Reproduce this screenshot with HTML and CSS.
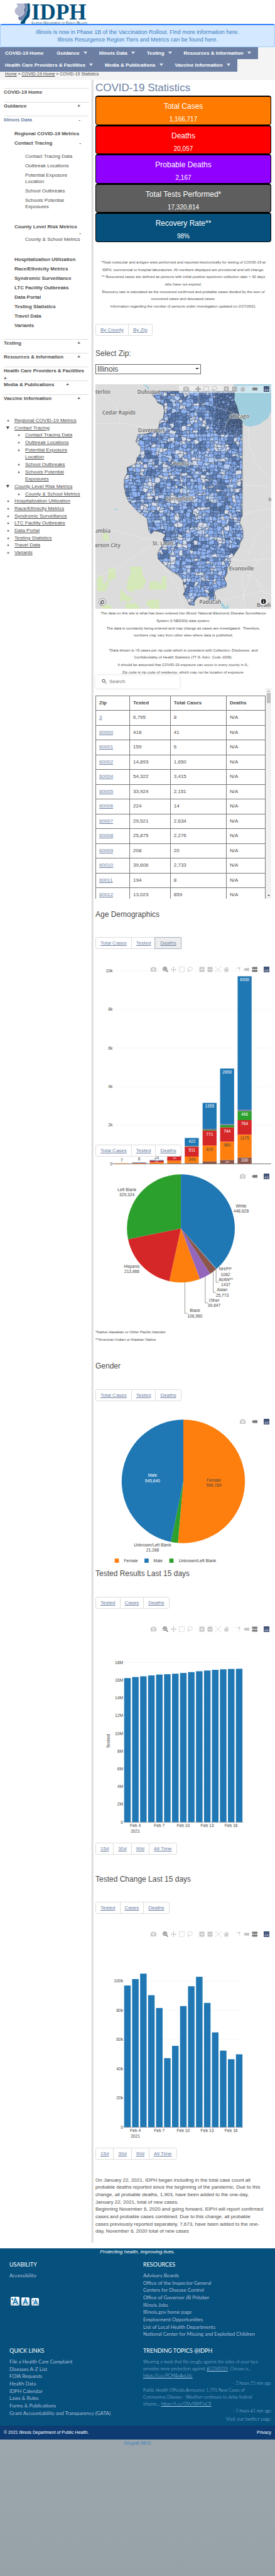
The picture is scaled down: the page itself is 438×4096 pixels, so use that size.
FILE: index.html
```html
<!DOCTYPE html>
<html lang="en">
<head>
<meta charset="utf-8">
<meta name="viewport" content="width=device-width, initial-scale=1">
<title>COVID-19 Statistics | IDPH</title>
<link rel="stylesheet" href="styles.css">
</head>
<body>
<header class="site-header">
  <a class="logo" href="#" aria-label="Illinois Department of Public Health">
    <svg viewBox="0 0 120 34" aria-hidden="true">
      <g transform="scale(.2794 .2206) translate(-82 -23)" stroke="#fff" stroke-width="2">
        <path fill="#05507c" d="M150 24h20l2 55-4 40-14 18-8 15-4 20-24 4-2-14 16-30 22-60z"/>
        <path fill="#6c7fa3" d="M133 24h20l3 36-8 45-14 26-10 20-18-8-4-18 12-10z"/>
        <path fill="#b4bad2" d="M93 24h42l6 26-8 22 5 22-10 18-14 10-14-10-12-12-6-20 6-20 12-12z"/>
      </g>
      <text class="logo-name" x="27" y="26">IDPH</text>
      <text class="logo-sub" x="27" y="33">Illinois Department of Public Health</text>
    </svg>
  </a>
</header>
<div class="banner">
  <a href="#">Illinois is now in Phase 1B of the Vaccination Rollout. Find more information here.</a>
  <a href="#">Illinois Resurgence Region Tiers and Metrics can be found here.</a>
</div>
<div class="top">
  <nav class="nav">
    <a href="#">COVID-19 Home</a>
    <a class="has-menu" href="#">Guidance</a>
    <a class="has-menu" href="#">Illinois Data</a>
    <a class="has-menu" href="#">Testing</a>
    <a class="has-menu" href="#">Resources &amp; Information</a>
    <a class="has-menu" href="#">Health Care Providers &amp; Facilities</a>
    <a class="has-menu" href="#">Media &amp; Publications</a>
    <a class="has-menu" href="#">Vaccine Information</a>
  </nav>
  <div class="crumbs"><a href="#">Home</a> » <a href="#">COVID-19 Home</a> » COVID-19 Statistics</div>
</div>
<div class="columns">
  <aside class="sidebar">
    <ul class="menu">
      <li><a href="#">COVID-19 Home</a></li>
      <li><a href="#">Guidance</a><button>+</button></li>
      <li><a class="active" href="#">Illinois Data</a><button>-</button></li>
    </ul>
    <ul class="submenu">
      <li><a href="#">Regional COVID-19 Metrics</a></li>
      <li><a href="#">Contact Tracing</a><button>-</button></li>
      <li class="nested">
        <ul>
          <li><a href="#">Contact Tracing Data</a></li>
          <li><a href="#">Outbreak Locations</a></li>
          <li><a href="#">Potential Exposure<br>Location</a></li>
          <li><a href="#">School Outbreaks</a></li>
          <li><a href="#">Schools Potential<br>Exposures</a></li>
        </ul>
      </li>
      <li class="stacked"><a href="#">County Level Risk Metrics</a><button>-</button></li>
      <li class="nested last">
        <ul><li><a href="#">County &amp; School Metrics</a></li></ul>
      </li>
      <li><a href="#">Hospitalization Utilization</a></li>
      <li><a href="#">Race/Ethnicity Metrics</a></li>
      <li><a href="#">Syndromic Surveillance</a></li>
      <li><a href="#">LTC Facility Outbreaks</a></li>
      <li><a href="#">Data Portal</a></li>
      <li><a href="#">Testing Statistics</a></li>
      <li><a href="#">Travel Data</a></li>
      <li><a href="#">Variants</a></li>
    </ul>
    <ul class="menu second">
      <li><a href="#">Testing</a><button>+</button></li>
      <li><a href="#">Resources &amp; Information</a><button>+</button></li>
      <li><a href="#">Health Care Providers &amp; Facilities</a><button>+</button></li>
      <li class="near"><a href="#">Media &amp; Publications</a><button>+</button></li>
      <li><a href="#">Vaccine Information</a><button>+</button></li>
    </ul>
    <ul class="links">
      <li><a href="#">Regional COVID-19 Metrics</a></li>
      <li class="open"><a href="#">Contact Tracing</a>
        <ul>
          <li><a href="#">Contact Tracing Data</a></li>
          <li><a href="#">Outbreak Locations</a></li>
          <li><a href="#">Potential Exposure<br>Location</a></li>
          <li><a href="#">School Outbreaks</a></li>
          <li><a href="#">Schools Potential<br>Exposures</a></li>
        </ul>
      </li>
      <li class="open"><a href="#">County Level Risk Metrics</a>
        <ul><li><a href="#">County &amp; School Metrics</a></li></ul>
      </li>
      <li><a href="#">Hospitalization Utilization</a></li>
      <li><a href="#">Race/Ethnicity Metrics</a></li>
      <li><a href="#">Syndromic Surveillance</a></li>
      <li><a href="#">LTC Facility Outbreaks</a></li>
      <li><a href="#">Data Portal</a></li>
      <li><a href="#">Testing Statistics</a></li>
      <li><a href="#">Travel Data</a></li>
      <li><a href="#">Variants</a></li>
    </ul>
  </aside>
  <main class="main">
    <h1>COVID-19 Statistics</h1>
    <div class="cards">
      <div class="card cases"><h3>Total Cases</h3><p>1,166,717</p></div>
      <div class="card deaths"><h3>Deaths</h3><p>20,057</p></div>
      <div class="card probable"><h3>Probable Deaths</h3><p>2,167</p></div>
      <div class="card tests"><h3>Total Tests Performed*</h3><p>17,320,814</p></div>
      <div class="card recovery"><h3>Recovery Rate**</h3><p>98%</p></div>
    </div>
    <p class="notes summary">*Total molecular and antigen tests performed and reported electronically for testing of COVID-19 at<br>IDPH, commercial or hospital laboratories. All numbers displayed are provisional and will change.<br>** Recovered cases are defined as persons with initial positive specimen collection date &gt; 42 days<br>who have not expired.<br>Recovery rate is calculated as the recovered confirmed and probable cases divided by the sum of<br>recovered cases and deceased cases.<br>Information regarding the number of persons under investigation updated on 2/17/2021.</p>
    <div class="tabs by"><a href="#">By County</a><a href="#">By Zip</a></div>
    <label class="h2 zip-label" for="zip">Select Zip:</label>
    <select id="zip"><option>Illinois</option></select>
    <div class="chart map">
      <svg id="map" viewBox="0 0 502 641" role="img" aria-label="Cases by zip code"></svg>
      <div class="modebar on-map" data-icons="camera|pan* box lasso|plus minus home|tag*|logo"></div>
    </div>
    <p class="notes map-notes">The data on this site is what has been entered into Illinois' National Electronic Disease Surveillance<br>System (I-NEDSS) data system.<br>The data is constantly being entered and may change as cases are investigated.&nbsp; Therefore,<br>numbers may vary from other sites where data is published.<br><br>*Data shown is &gt;5 cases per zip code which is consistent with Collection, Disclosure, and<br>Confidentiality of Health Statistics (77 Ill. Adm. Code 1005).<br>It should be assumed that COVID-19 exposure can occur in every county in IL.<br>Zip code is zip code of residence, which may not be location of exposure.</p>
    <label class="search">
      <svg viewBox="0 0 16 16" aria-hidden="true"><circle cx="6" cy="6" r="4.5"/><path d="M9.500 9.500 15 15"/></svg>
      <input type="text" placeholder="Search" aria-label="Search">
    </label>
    <div class="table-box">
      <div class="table-clip">
        <table>
          <colgroup><col class="c1"><col class="c2"><col class="c3"><col class="c4"></colgroup>
          <thead><tr><th>Zip</th><th>Tested</th><th>Total Cases</th><th>Deaths</th></tr></thead>
          <tbody>
            <tr><td><a href="#">3</a></td><td>6,795</td><td>8</td><td>N/A</td></tr>
            <tr><td><a href="#">60000</a></td><td>418</td><td>41</td><td>N/A</td></tr>
            <tr><td><a href="#">60001</a></td><td>159</td><td>6</td><td>N/A</td></tr>
            <tr><td><a href="#">60002</a></td><td>14,893</td><td>1,650</td><td>N/A</td></tr>
            <tr><td><a href="#">60004</a></td><td>54,322</td><td>3,415</td><td>N/A</td></tr>
            <tr><td><a href="#">60005</a></td><td>33,924</td><td>2,151</td><td>N/A</td></tr>
            <tr><td><a href="#">60006</a></td><td>224</td><td>14</td><td>N/A</td></tr>
            <tr><td><a href="#">60007</a></td><td>29,521</td><td>2,634</td><td>N/A</td></tr>
            <tr><td><a href="#">60008</a></td><td>25,875</td><td>2,276</td><td>N/A</td></tr>
            <tr><td><a href="#">60009</a></td><td>208</td><td>20</td><td>N/A</td></tr>
            <tr><td><a href="#">60010</a></td><td>39,606</td><td>2,733</td><td>N/A</td></tr>
            <tr><td><a href="#">60011</a></td><td>194</td><td>8</td><td>N/A</td></tr>
            <tr><td><a href="#">60012</a></td><td>13,023</td><td>859</td><td>N/A</td></tr>
          </tbody>
        </table>
      </div>
      <div class="scrollbar" aria-hidden="true"><i class="up"></i><i class="thumb"></i><i class="down"></i></div>
    </div>

    <h2 class="age-title">Age Demographics</h2>
    <div class="tabs"><a href="#">Total Cases</a><a href="#">Tested</a><a class="on" href="#">Deaths</a></div>
    <div class="chart">
      <svg id="age" viewBox="0 0 502 590" role="img" aria-label="Deaths by age and race"></svg>
      <div class="modebar" data-icons="camera|zoom* pan box lasso|plus minus auto home|spike tag compare*|logo"></div>
      <div class="tabs overlay"><a href="#">Total Cases</a><a href="#">Tested</a><a href="#">Deaths</a></div>
    </div>
    <div class="chart">
      <svg id="race" viewBox="0 8 502 442" role="img" aria-label="Cases by race"></svg>
      <div class="modebar" data-icons="camera|tag*|logo"></div>
    </div>
    <p class="notes left">*Native Hawaiian or Other Pacific Islander<br>**American Indian or Alaskan Native</p>

    <h2 class="gender-title">Gender</h2>
    <div class="tabs"><a href="#">Total Cases</a><a href="#">Tested</a><a href="#">Deaths</a></div>
    <div class="chart">
      <svg id="gender" viewBox="0 0 502 442" role="img" aria-label="Cases by gender"></svg>
      <div class="modebar" data-icons="camera|tag*|logo"></div>
    </div>

    <h2>Tested Results Last 15 days</h2>
    <div class="tabs"><a href="#">Tested</a><a href="#">Cases</a><a href="#">Deaths</a></div>
    <div class="chart">
      <svg id="tested" viewBox="0 0 502 629" role="img" aria-label="Tested results"></svg>
      <div class="modebar" data-icons="camera|zoom* pan box lasso|plus minus auto home|spike tag compare*|logo"></div>
    </div>
    <div class="tabs range"><a href="#">15d</a><a href="#">30d</a><a href="#">90d</a><a href="#">All Time</a></div>

    <h2 class="change-title">Tested Change Last 15 days</h2>
    <div class="tabs"><a href="#">Tested</a><a href="#">Cases</a><a href="#">Deaths</a></div>
    <div class="chart">
      <svg id="change" viewBox="0 0 502 629" role="img" aria-label="Tested change"></svg>
      <div class="modebar" data-icons="camera|zoom* pan box lasso|plus minus auto home|spike tag compare*|logo"></div>
    </div>
    <div class="tabs range"><a href="#">15d</a><a href="#">30d</a><a href="#">90d</a><a href="#">All Time</a></div>

    <p class="statement">On January 22, 2021, IDPH began including in the total case count all<br>probable deaths reported since the beginning of the pandemic. Due to this<br>change, all probable deaths, 1,903, have been added to the one-day,<br>January 22, 2021, total of new cases.<br>Beginning November 6, 2020 and going forward, IDPH will report confirmed<br>cases and probable cases combined. Due to this change, all probable<br>cases previously reported separately, 7,673, have been added to the one-<br>day, November 6, 2020 total of new cases</p>
  </main>
</div>
<footer>
  <div class="foot">
    <p class="tagline">Protecting health, improving lives.</p>
    <div class="foot-grid">
      <section>
        <h4>USABILITY</h4>
        <ul><li><a href="#">Accessibility</a></li></ul>
        <div class="sizes">
          <button class="big" aria-label="Larger text"><svg viewBox="0 0 15 15"><path d="M4 13 8 3l4 10M5.500 9.500h5M1.500 4h3M3 2.500v3"/></svg></button>
          <button class="mid" aria-label="Normal text"><svg viewBox="0 0 15 15"><path d="M3.500 13 7.500 3l4 10M5 9.500h5"/></svg></button>
          <button class="small" aria-label="Smaller text"><svg viewBox="0 0 15 15"><path d="M5 13 8.500 4l3.500 9M6 10h5M2 5h3"/></svg></button>
        </div>
      </section>
      <section>
        <h4>RESOURCES</h4>
        <ul>
          <li><a href="#">Advisory Boards</a></li>
          <li><a href="#">Office of the Inspector General</a></li>
          <li><a href="#">Centers for Disease Control</a></li>
          <li><a href="#">Office of Governor JB Pritzker</a></li>
          <li><a href="#">Illinois Jobs</a></li>
          <li><a href="#">Illinois.gov home page</a></li>
          <li><a href="#">Employment Opportunities</a></li>
          <li><a href="#">List of Local Health Departments</a></li>
          <li><a href="#">National Center for Missing and Exploited Children</a></li>
        </ul>
      </section>
      <section>
        <h4>QUICK LINKS</h4>
        <ul>
          <li><a href="#">File a Health Care Complaint</a></li>
          <li><a href="#">Diseases A-Z List</a></li>
          <li><a href="#">FOIA Requests</a></li>
          <li><a href="#">Health Data</a></li>
          <li><a href="#">IDPH Calendar</a></li>
          <li><a href="#">Laws &amp; Rules</a></li>
          <li><a href="#">Forms &amp; Publications</a></li>
          <li><a href="#">Grant Accountability and Transparency (GATA)</a></li>
        </ul>
      </section>
      <section class="tweets">
        <h4>TRENDING TOPICS @IDPH</h4>
        <p>Wearing a mask that fits snugly against the sides of your face<br>provides more protection against <a href="#">#COVID19</a>. Choose a…<br><a href="#">https://t.co/PCM4xAqUdc</a></p>
        <p class="when">- <em>2 hours 25 min</em> ago</p>
        <p>Public Health Officials Announce 1,795 New Cases of<br>Coronavirus Disease - Weather continues to delay federal<br>shipme… <a href="#">https://t.co/OVy98M7aCX</a></p>
        <p class="when">- <em>5 hours 41 min</em> ago</p>
        <p class="visit">Visit our twitter page</p>
      </section>
    </div>
  </div>
  <div class="legal"><span>© 2021 Illinois Department of Public Health.</span><a href="#">Privacy</a></div>
  <div class="seo"><a href="#">Drupal SEO</a></div>
</footer>
<script src="script.js"></script>
</body>
</html>
```
FILE: styles.css
```css
* { box-sizing: border-box; }
html { background: #99a4ab; }
body {
  margin: 0;
  background: #fff;
  color: #4a4a4a;
  font: 8px/12px "Liberation Sans", Arial, sans-serif;
}
h1, h2, h3, h4, p, ul { margin: 0; padding: 0; font-weight: normal; }
ul { list-style: none; }
a { color: inherit; }
button { padding: 0; border: 0; background: none; color: inherit; font: inherit; }

.site-header { height: 38px; padding: 5px 0 0 23px; }
.logo { display: block; width: 120px; }
.logo svg { display: block; width: 100%; overflow: visible; }
.logo-name { font: bold 35px "Liberation Serif", serif; fill: #05507c; }
.logo-sub { font: 6px "Liberation Serif", serif; font-variant: small-caps; fill: #05507c; }

.banner {
  display: flex;
  flex-direction: column;
  align-items: center;
  height: 37px;
  padding-top: 5px;
  border: 1px solid #a4cdfb;
  border-top: 2px solid #2f80fb;
  border-radius: 3px;
  background: #d4e8ff;
  color: #3b80bd;
  font-size: 9px;
}
.banner a { text-decoration: none; white-space: nowrap; }

.top { background: #f4f4f4; padding-bottom: 5px; border-radius: 0 0 3px 3px; }
.nav { display: flex; flex-wrap: wrap; }
.nav a {
  display: flex;
  align-items: center;
  padding: 0 13px 0 8px;
  background: #6c7fa3;
  color: #fff;
  font-weight: bold;
  line-height: 20px;
  text-decoration: none;
}
.nav a:nth-child(-n+5) { line-height: 19px; }
.nav .has-menu { padding-right: 11px; }
.nav .has-menu::after {
  content: "";
  margin: 0 0 2px 6px;
  border: 3px solid transparent;
  border-top: 4px solid #e4e8f0;
  border-bottom: 0;
}
.crumbs { padding-left: 8px; font-size: 7px; line-height: 8px; }

.columns { display: grid; grid-template-columns: 146px 1fr; margin-bottom: 9px; }
.sidebar { padding: 13px 5px 0 6px; color: #4d4d4d; }
.main {
  padding: 3px 6px 12px 6px;
  background: linear-gradient(90deg, #bbb, #ddd 1px, #fff 4px) no-repeat;
}

.menu, .submenu { font-weight: bold; }
.menu a, .submenu a { text-decoration: none; white-space: nowrap; }
.menu .active { color: #6c7fa3; }
.menu li {
  display: flex;
  flex-wrap: wrap;
  align-content: flex-start;
  justify-content: space-between;
  height: 22px;
  padding-right: 13px;
  border-top: 1px solid #ddd;
}
.menu.second { margin-top: 11px; }
.menu.second .near { padding-right: 31px; }
.submenu { margin-top: 2px; padding-left: 17px; line-height: 10px; }
.submenu li {
  display: flex;
  flex-wrap: wrap;
  justify-content: space-between;
  padding: 0 12px 5px 0;
}
.submenu ul li { padding-right: 0; }
.submenu .nested { display: block; padding: 6px 0 17px 17px; }
.submenu .nested ul { white-space: nowrap; }
.submenu .stacked { flex-direction: column; padding-bottom: 0; }
.submenu .stacked button { align-self: flex-end; }
.submenu .nested.last { padding-top: 0; }

.links { margin-top: 14px; padding-left: 17px; line-height: 1.46; }
.links ul { padding-left: 17px; }
.links li { list-style: circle; }
.links .open { list-style: disclosure-open; }

h1 { margin-bottom: 2px; color: #6c7fa3; font-size: 17px; line-height: 20px; }
h2, .h2 { display: block; font-size: 12px; line-height: 14px; }
h2 { margin-bottom: 30px; }

.cards { display: grid; grid-auto-rows: 1fr; min-height: 233px; }
.card {
  padding-top: 8px;
  border: 1px solid #000;
  border-top-width: 2px;
  border-radius: 4px;
  color: #fff;
  text-align: center;
}
.card h3 { margin-bottom: 8px; font-size: 12px; line-height: 14px; }
.card p { font-size: 10px; }
.cases { background: #ff7b00; }
.deaths { background: #f00; }
.probable { background: #9000ff; }
.tests { background: #5e5e5e; }
.recovery { background: #05507c; }

.notes { font-size: 6px; line-height: 1.95; text-align: center; white-space: nowrap; }
.notes.summary { margin: 27px 0 21px; }
.notes.map-notes { margin-top: 2px; }
.notes.left { margin-top: 8px; text-align: left; }

.tabs {
  display: flex;
  width: max-content;
  margin-bottom: 21px;
  border: 1px solid #ddd;
  border-radius: 3px;
  background: #fff;
  color: #6c7fa3;
}
.tabs a { padding: 0 7px; line-height: 17px; }
.tabs a + a { border-left: 1px solid #ddd; }
.tabs .on { background: #eee; outline: 1px dotted #6c7fa3; }
.tabs.range { margin-bottom: 0; }

.zip-label { margin-bottom: 10px; }
select {
  display: block;
  width: 60%;
  height: 16px;
  padding: 0 2px;
  border: 1px solid #666;
  border-radius: 0;
  background: #fff;
  color: #4a4a4a;
  font: 12px/14px "Liberation Sans", Arial, sans-serif;
  appearance: none;
  background-image: linear-gradient(45deg, transparent 50%, #444 50%), linear-gradient(-45deg, transparent 50%, #444 50%);
  background-size: 3px 3px;
  background-position: right 5px center, right 2px center;
  background-repeat: no-repeat;
}

.chart { position: relative; }
.chart > svg { display: block; width: 100%; }
.chart text { font: 12px "Liberation Sans", Arial, sans-serif; fill: #444; text-anchor: middle; }
.chart text.light { fill: #fff; }
.chart text.end { text-anchor: end; }
.chart text.start { text-anchor: start; }
.chart text.axis { font-size: 14px; }
.chart text.tiny { font-size: 6px; }
.chart text.city {
  font: 600 15px "Open Sans", sans-serif;
  fill: #666;
  stroke: #e8e8e8;
  stroke-opacity: .7;
  stroke-width: 3px;
  paint-order: stroke;
}
.map { margin-top: 16px; }
.overlay { position: absolute; left: 0; bottom: 20px; margin: 0; }
.modebar { position: absolute; top: 7px; right: 1px; display: flex; gap: 6px; color: #c6c6c6; }
.modebar.on-map { top: 2px; right: 1px; padding: 1px 0 2px 5px; background: rgba(255, 255, 255, .5); color: #b0b0b0; }
.modebar div { display: flex; }
.modebar button { width: 13px; height: 9px; display: grid; place-items: center; }
.modebar svg { width: 9px; height: 9px; fill: currentColor; stroke: none; }
.modebar .active { color: #7b7b7b; }

.search {
  display: flex;
  align-items: center;
  gap: 4px;
  width: 134px;
  height: 20px;
  margin-top: -2px;
  padding-left: 10px;
  border-radius: 2px;
  background: #fff;
  box-shadow: 0 0 5px #ddd;
  position: relative;
}
.search svg { width: 8px; height: 9px; fill: none; stroke: #444; stroke-width: 2; }
.search input { width: 100px; padding: 0; border: 0; background: none; font: inherit; }
.search input::placeholder { color: #757575; }

.table-box { display: flex; height: 335px; }
.table-clip { flex: 1; overflow: hidden; padding-top: 12px; }
table { width: 100%; table-layout: fixed; border-collapse: collapse; }
.c1 { width: 20%; }
.c2 { width: 24%; }
.c3 { width: 33%; }
.c4 { width: 23%; }
th, td { height: 23px; padding: 0 5px; border: 1px solid #777; text-align: left; }
tbody tr:nth-child(odd) td { height: 24px; }
td a { color: #6c7fa3; }
.scrollbar { display: flex; flex-direction: column; align-items: center; width: 9px; background: #f1f1f1; }
.scrollbar .thumb { width: 6px; height: 16px; margin-top: 2px; background: #c1c1c1; }
.scrollbar .up { margin-top: 4px; border: 2px solid transparent; border-bottom-color: #999; border-top: 0; }
.scrollbar .down { margin: auto 0 4px; border: 2px solid transparent; border-top-color: #444; border-bottom: 0; }

.age-title { margin-top: 18px; margin-bottom: 29px; }
.gender-title { margin-top: 28px; }
.change-title { margin-top: 32px; margin-bottom: 29px; }
.statement { margin-top: 27px; line-height: 1.46; white-space: nowrap; }

.foot { padding: 0 6px 5px 15px; background: #05507c; color: #aebfdb; }
.tagline { margin-right: 9px; color: #fff; font-style: italic; text-align: center; }
.foot-grid {
  display: grid;
  grid-template-columns: 213px minmax(0, 1fr);
  row-gap: 14px;
  padding-top: 8px;
  font: 8px/1.46 Lato, sans-serif;
}
.foot h4 { margin-bottom: 6px; color: #fff; font-size: 9px; line-height: 12px; }
.foot ul a { text-decoration: none; white-space: nowrap; }
.sizes { display: flex; align-items: flex-end; gap: 3px; margin: 27px 0 0 2px; }
.sizes button { width: 13px; height: 13px; border-radius: 2px; background: linear-gradient(#fff, #d8dde2); }
.sizes .big { width: 14px; height: 14px; }
.sizes .small { width: 12px; height: 12px; }
.sizes svg { display: block; width: 100%; fill: none; stroke: #1f7fb8; stroke-width: 2; }
.tweets p { color: #a5c8e6; font-size: 7px; font-weight: 300; line-height: 1.6; white-space: nowrap; }
.tweets p.when, .tweets p.visit { text-align: right; }
.tweets p.visit { font-size: 8px; }
.legal { display: flex; justify-content: space-between; padding: 0 6px; background: #0d3b72; color: #fff; font-size: 7px; line-height: 22px; }
.legal a { text-decoration: none; }
.seo { min-height: 218px; background: linear-gradient(#9ca6ad, #97a2a8); color: #3b80bd; text-align: center; }
.seo a { text-decoration: none; }
```
FILE: script.js
```js
const BLUE = '#1f77b4', ORANGE = '#ff7f0e', GREEN = '#2ca02c', RED = '#d62728', PURPLE = '#9467bd', BROWN = '#8c564b';
const rect = (x, y, w, h, fill) => `<rect x="${x}" y="${y}" width="${w}" height="${h}" fill="${fill}"/>`;
const text = (x, y, s, cls = '') => `<text x="${x}" y="${y}" class="${cls}">${s}</text>`;
const line = (x1, y1, x2, y2, c) => `<path d="M${x1} ${y1}L${x2} ${y2}" stroke="${c}" fill="none"/>`;
const put = (id, html) => { document.getElementById(id).innerHTML = html; };

/* Toolbar icons */
const ICONS = {
  camera: '<path fill-rule="evenodd" d="M0 4q0-1 1-1h3l1-2h6l1 2h3q1 0 1 1v9q0 1-1 1H1q-1 0-1-1zM8 4a4 4 0 1 0 0 8 4 4 0 0 0 0-8zM8 6a2 2 0 1 1 0 4 2 2 0 0 1 0-4z"/>',
  zoom: '<path fill-rule="evenodd" d="M6.500 0a6.500 6.500 0 0 1 5.500 10l4 4-2 2-4-4A6.500 6.500 0 1 1 6.500 0zM6.500 2a4.500 4.500 0 1 0 0 9 4.500 4.500 0 0 0 0-9z"/><path d="M4 4h5v5H4z"/>',
  pan: '<path d="M8 0l3 3H9v4h4V5l3 3-3 3V9H9v4h2l-3 3-3-3h2V9H3v2L0 8l3-3v2h4V3H5z"/>',
  box: '<path d="M1 1h14v14H1z" fill="none" stroke="currentColor" stroke-width="2" stroke-dasharray="2.200 2"/>',
  lasso: '<path d="M4 10C-1 7 2 1 9 1c8 0 8 9 0 10-2 0-4-1-5-1zm0 0c-3 1-1 4 1 3s1-3-1-3zm0 3l-1 3" fill="none" stroke="currentColor" stroke-width="1.500"/>',
  plus: '<path fill-rule="evenodd" d="M1 1h14v14H1zM7 4v3H4v2h3v3h2V9h3V7H9V4z"/>',
  minus: '<path fill-rule="evenodd" d="M1 1h14v14H1zM4 7v2h8V7z"/>',
  auto: '<path d="M0 4V0h4M12 0h4v4M16 12v4h-4M4 16H0v-4M4 4l8 8M12 4l-8 8" fill="none" stroke="currentColor" stroke-width="1.500"/>',
  home: '<path d="M8 1l8 7-1 1-7-6-7 6-1-1zM8 5l5 4v6H9v-4H7v4H3V9zM11 2h2v4l-2-2z"/>',
  spike: '<path d="M1 4h9M11 6v9" fill="none" stroke="currentColor" stroke-width="2" stroke-dasharray="2 2"/><circle cx="11" cy="4" r="2.500"/>',
  tag: '<path d="M0 8l4-4h12v8H4z"/>',
  compare: '<path d="M0 4l2-3h14v6H2zM0 12l2-3h14v6H2z"/>',
  logo: '<path fill="#3f4f75" d="M0 0h16v16H0z"/><path fill="#fff" d="M3 9h1v5H3zM6 7h1v7H6zM9 9h1v5H9zM12 7h1v7h-1z"/><path fill="#80cfbe" d="M3 3h1v1H3zM6 3h1v1H6zM9 3h1v1H9zM12 3h1v1h-1zM3 6h1v1H3zM9 6h1v1H9z"/>'
};
document.querySelectorAll('.modebar').forEach(bar => {
  bar.innerHTML = bar.dataset.icons.split('|').map(group => '<div>' + group.split(' ').map(name => {
    const key = name.replace('*', '');
    return `<button class="${name.endsWith('*') ? 'active' : ''}" aria-label="${key}"><svg viewBox="0 0 16 16">${ICONS[key]}</svg></button>`;
  }).join('') + '</div>').join('');
});

/* Age chart: each stack lists its boundaries from the top down */
const stacks = [
  [[573.5, ORANGE]],
  [[571, BLUE], [572.5, RED], [573.5, ORANGE]],
  [[564, BLUE], [566, RED], [571, ORANGE]],
  [[545, BLUE], [552, RED], [566, ORANGE], [573.5, BROWN]],
  [[501, BLUE], [524, PURPLE], [525, GREEN], [526, RED], [554, ORANGE], [573, BROWN]],
  [[401, BLUE], [475, PURPLE], [477, GREEN], [480, RED], [523, ORANGE], [568, BROWN]],
  [[303, BLUE], [462, PURPLE], [464, GREEN], [471, RED], [512, ORANGE], [564, BROWN]],
  [[40, BLUE], [421, PURPLE], [424, GREEN], [450, RED], [492, ORANGE], [557, BROWN]]
];
let age = '';
['10k', '8k', '6k', '4k', '2k', '0'].forEach((t, i) => {
  const y = 24.5 + i * 110;
  age += line(50, y, 502, y, t === '0' ? '#555' : '#eee') + text(49, y + 4, t, 'end');
});
stacks.forEach((st, i) => st.forEach(([y, c], k) => {
  const end = k + 1 < st.length ? st[k + 1][0] : 575;
  age += rect(55 + Math.round(i * 50.1), y, 40, end - y, c);
}));
age += line(50, 575, 502, 575, '#666');
[[75, 568, '7'], [125, 565, '6'], [175, 561, '24'],
 [276, 514, '422', 'light'], [276, 540, '511', 'light'], [276, 567, '349'],
 [326, 415, '1355', 'light'], [326, 494, '771', 'light'], [326, 537, '829'],
 [376, 317, '2890', 'light'], [376, 485, '744', 'light'], [376, 525, '960'], [376, 572, '198', 'light tiny'],
 [426, 53, '6930', 'light'], [426, 438, '466', 'light'], [426, 464, '764', 'light'], [426, 506, '1175'], [426, 569, '330', 'light'],
 [226, 561, '255', 'light tiny'], [175, 570, '107', 'light tiny']
].forEach(a => { age += text(...a); });
put('age', age);

/* Pies */
function pie(cx, cy, r, slices) {
  const total = slices.reduce((s, v) => s + v[0], 0);
  let a = 0, out = '';
  for (const [v, c] of slices) {
    const b = a + v / total * 2 * Math.PI;
    out += `<path fill="${c}" d="M${cx} ${cy}L${cx + r * Math.sin(a)} ${cy - r * Math.cos(a)}A${r} ${r} 0 ${b - a > Math.PI ? 1 : 0} 1 ${cx + r * Math.sin(b)} ${cy - r * Math.cos(b)}z"/>`;
    a = b;
  }
  return out;
}
let race = pie(244, 177, 154, [[448628, BLUE], [1082, '#8fa9bd'], [1437, BLUE], [25773, BROWN], [39647, PURPLE], [106960, ORANGE], [213866, RED], [329324, GREEN]]);
[[90, 70, 86, 'Left Blank', '329,324'], [416, 117, 132, 'White', '448,628'], [104, 289, 304, 'Hispanic', '213,866'],
 [371, 297, 313, 'NH/PI*', '1082'], [372, 327, 342, 'AI/AN**', '1437'], [362, 356, 372, 'Asian', '25,773'],
 [339, 386, 401, 'Other', '39,647'], [284, 415, 431, 'Black', '106,960']
].forEach(([x, y1, y2, a, b]) => { race += text(x, y1, a) + text(x, y2, b); });
race += '<path fill="none" stroke="#444" d="M344.500 293V330.500H352M336.500 300V359.500H344M313.500 315V389.500H321M255.500 331V419H263"/>';
put('race', race);

put('gender', pie(251, 191, 176, [[599789, ORANGE], [21288, GREEN], [545640, BLUE]]) +
  text(163, 178, 'Male', 'light') + text(163, 194, '545,640', 'light') +
  text(338, 191, 'Female') + text(338, 207, '599,789') +
  text(163, 376, 'Unknown/Left Blank') + text(163, 391, '21,288') +
  rect(55, 411, 12, 12, ORANGE) + text(81, 421, 'Female', 'start') +
  rect(140, 411, 12, 12, BLUE) + text(166, 421, 'Male', 'start') +
  rect(211, 411, 12, 12, GREEN) + text(238, 421, 'Unknown/Left Blank', 'start'));

/* Daily bar charts */
function daily(id, ticks, perTick, heights, title) {
  let s = '';
  ticks.forEach((t, i) => {
    const y = 571 - i * perTick;
    s += line(80, y, 422, y, '#eee') + text(79, y + 4, t, 'end');
  });
  heights.forEach((h, i) => { s += rect(82 + i * 22.8, 571 - h, 18.6, h, BLUE); });
  s += line(80, 571, 422, 571, '#777');
  ['Feb 4', 'Feb 7', 'Feb 10', 'Feb 13', 'Feb 16'].forEach((t, i) => { s += text(114 + i * 68.4, 584, t); });
  s += text(114, 600, '2021');
  if (title) s += `<text class="axis" transform="translate(42 340) rotate(-90)">${title}</text>`;
  put(id, s);
}
daily('tested', ['0', '2M', '4M', '6M', '8M', '10M', '12M', '14M', '16M', '18M'], 50.6,
  [411, 414, 416, 418.5, 421, 422, 423.5, 425.5, 428, 430.5, 432.5, 434.5, 436, 437, 437.5], 'Tested');
daily('change', ['0', '20k', '40k', '60k', '80k', '100k'], 83.4,
  [404, 422.5, 438, 376.5, 340, 197, 232, 345.5, 402, 429, 354.5, 270.5, 218.5, 194, 208]);

/* Zip code map */
let seed = 7;
const rnd = () => (seed = (seed * 16807) % 2147483647) / 2147483647;
const outline = 'M865 85L915 73H1338L1336 130 1350 165 1362 215V240L1383 265V870L1375 880 1368 915 1380 940 1387 970V1010L1372 1035 1365 1070 1340 1110 1330 1130 1312 1140 1316 1160 1308 1190 1298 1200 1296 1235 1280 1270 1292 1300 1290 1322 1240 1338 1225 1350 1222 1368 1231 1385 1228 1410 1200 1408 1180 1390 1145 1383 1125 1393 1110 1415 1108 1441 1080 1436 1068 1405 1046 1370 1056 1350 1046 1300 1045 1280 1020 1250 970 1215 925 1170 903 1145 900 1110 918 1070 940 1045 930 1020 945 990 915 972 880 965 862 985 850 965 843 920 840 885 790 845 735 780 718 735 708 680 710 630 727 595 725 560 760 545 778 530 782 500 803 470V430L775 395 788 350 840 345 905 310 912 265 932 245 938 200 932 165 898 145 893 125 870 100z';
const hubs = [[1310, 200, 110], [1035, 120, 24], [1150, 120, 40], [1040, 545, 34], [930, 770, 26], [960, 1010, 42], [1080, 810, 24], [1140, 590, 20], [1260, 670, 36], [850, 480, 24], [1020, 250, 50], [1240, 830, 36], [1110, 1070, 30], [940, 1120, 26], [1160, 420, 24], [1320, 400, 26], [730, 720, 22], [1340, 1090, 30], [860, 590, 20]];
function cells(x0, y0, x1, y1, step, dark) {
  const nx = Math.ceil((x1 - x0) / step), ny = Math.ceil((y1 - y0) / step), V = [], H = [], W = [];
  for (let j = 0; j <= ny; j++) {
    V.push([]);
    for (let i = 0; i <= nx; i++) V[j].push([Math.round(x0 + (i + (rnd() - .5) * .75) * step), Math.round(y0 + (j + (rnd() - .5) * .75) * step)]);
  }
  const jog = (a, b, horizontal) => {
    const t = .3 + rnd() * .4, d = (rnd() - .5) * step * .5, p = [];
    const mx = Math.round(a[0] + (b[0] - a[0]) * t), my = Math.round(a[1] + (b[1] - a[1]) * t);
    if (horizontal) p.push([mx, a[1]], [mx, Math.round(my + d)], [b[0], Math.round(my + d)]);
    else p.push([a[0], my], [Math.round(mx + d), my], [Math.round(mx + d), b[1]]);
    return [a, ...p, b];
  };
  for (let j = 0; j <= ny; j++) {
    H.push([]); W.push([]);
    for (let i = 0; i <= nx; i++) {
      H[j].push(i < nx ? jog(V[j][i], V[j][i + 1], true) : null);
      W[j].push(j < ny ? jog(V[j][i], V[j + 1][i], false) : null);
    }
  }
  let out = '';
  for (let j = 0; j < ny; j++) for (let i = 0; i < nx; i++) {
    const pts = [...H[j][i], ...W[j][i + 1], ...[...H[j + 1][i]].reverse(), ...[...W[j][i]].reverse()];
    const cx = V[j][i][0] + step / 2, cy = V[j][i][1] + step / 2, r = rnd();
    const near = hubs.some(h => Math.hypot(cx - h[0], cy - h[1]) < h[2]);
    let c = r < .17 ? '#d6deee' : r < .3 ? '#b4cdf4' : r < .7 ? '#8fb4f4' : r < .84 ? '#7ba1e0' : r < .94 ? '#6486bf' : '#5577ad';
    if (near || dark) c = r < .15 ? '#7ba1e0' : r < .4 ? '#6486bf' : '#5577ad';
    out += `<path fill="${c}" d="M${pts.map(p => p.join(' ')).join('L')}z"/>`;
  }
  return out;
}
let map = '<rect width="502" height="641" fill="#dcdcdc"/><g transform="scale(.5006 .4464) translate(-545 -29)">' +
  '<path fill="#9fcfdf" d="M1335 29H1548V200L1530 245 1480 285 1430 300 1395 292 1383 265 1362 215 1350 165 1336 130zM820 29l20 8 12 20-6 8-10-20-14-10zM1255 1430l20 35h30l-4-38-12 30-16-30zM650 828l15-5 12 5-12 5z"/>' +
  '<path fill="#d5e8b9" d="M740 1195h70v40l25 55-28 50h-40l-5 20-40-20 8-60 18-50zM620 1205h40v65l-35 10-20 70h-50l-2-80 32-25 5 60 25-20zM925 1255h25v85h-98v-45l30-12 40 20zM680 1340l20 10 25 30 35 15-30 30-20-20-25 20 5-50zM850 1405h60v60h-50l-30-35zM715 1430l60-5 30 40h-90zM580 1435l60 5-10 25h-45zM590 980l25 0 10 50-40-5z"/>' +
  '<g fill="none" stroke="#f7f7f7" stroke-width="1.500"><path d="M590 95c60 50 90 70 95 185M545 281c120 0 160-10 240 15l120 10M1420 300v100c20 100 60 180 128 240M640 965c60 10 120 30 180 50l110 10M545 1252c120-20 200-120 270-160 60-30 80-30 130-40M1548 825c-80 10-120 20-180 40M1330 1148c60 10 120 5 218-5M900 1150c60 80 130 180 145 315M1380 1240l18 225M1380 1240l70 15 60 80M1548 1060l-100 130-80 260M1460 1270l40 90 48 10M1380 675h100c40 0 50 20 68 40M1095 1440l10-70M1240 1420l90-30 218-50M1410 1130l60-140 78-70"/></g>' +
  `<clipPath id="state"><path d="${outline}"/></clipPath><g clip-path="url(#state)" stroke="#3d4654" stroke-width="1.600"><path fill="#8fb4f4" d="${outline}"/>` +
  cells(690, 60, 1400, 1450, 22, false) + cells(1230, 60, 1400, 340, 13, true) + cells(1300, 170, 1400, 300, 8, true) + '</g>' +
  `<path fill="none" stroke="#444" stroke-width="2" d="${outline}"/>` +
  '<g fill="none" stroke="#fff" stroke-opacity=".6" stroke-width="2"><path d="M1132 73l5 70 75 25 90 30 60 30M1132 73c-10 200-15 300 5 400l-10 120 110 60 10 280M905 310l10 220-20-60 60 20 180 110M910 345l120 10h200c70-60 80-100 90-150M1320 220c-60 80-20 150-100 220-60 120-120 180-140 300l-60 160-40 130M935 1020c100 0 130-50 210-70 100-40 130-60 235-100M930 770l110 20 60-60 120-60 160 10M1060 560v250M1060 810l-160-30-170-10M985 1050l160 70v170l-40 110M1145 1130h190M985 1050l100-60"/></g></g>';
map += text(43, 26, 'Waterloo', 'city end') + text(153, 26, 'Dubuque', 'city') + text(67, 86, 'Cedar Rapids', 'city') +
  text(411, 97, 'Chicago', 'city') + text(160, 137, 'Davenport', 'city') + text(245, 231, 'Peoria', 'city') +
  text(240, 331, 'Springfield', 'city') + text(43, 424, 'Columbia', 'city end') + text(71, 464, 'Jefferson City', 'city end') +
  text(193, 459, 'St. Louis', 'city') + text(417, 530, 'Evansville', 'city') + text(328, 625, 'Paducah', 'city') +
  text(461, 635, 'Bowling Green', 'city start') + text(494, 334, 'Indianapolis', 'city start') +
  '<circle cx="20" cy="621" r="10" fill="#fff" stroke="#777" stroke-width="1.500"/><path fill="#777" fill-rule="evenodd" d="M14 628v-7a6 6 0 1 1 6 6zM20 618v2h-2v2h2v2h1v-2h2v-2h-2v-2z"/>' +
  '<circle cx="480" cy="619" r="11" fill="#f0f0f0"/><circle cx="480" cy="619" r="7" fill="#222"/><path stroke="#fff" stroke-width="2" d="M480 614v2M480 618v6"/>';
put('map', map);
```
